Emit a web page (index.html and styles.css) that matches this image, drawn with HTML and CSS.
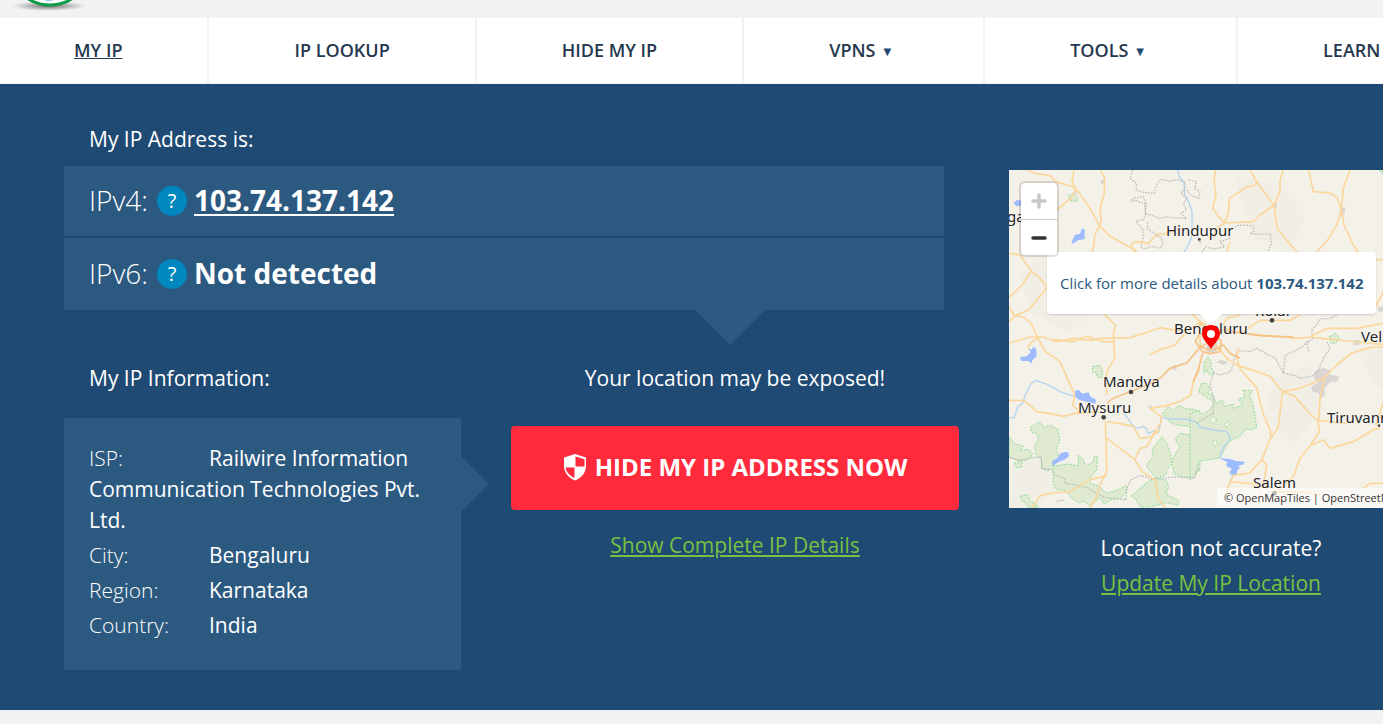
FILE: index.html
```html
<!DOCTYPE html>
<html lang="en">
<head>
<meta charset="utf-8">
<title>My IP Address</title>
<link rel="stylesheet" href="styles.css">
</head>
<body>
<header class="top">
  <svg class="logo" width="90" height="18" viewBox="0 0 90 18" aria-hidden="true">
    <defs>
      <radialGradient id="shade"><stop offset="0" stop-color="#555" stop-opacity=".9"/><stop offset=".5" stop-color="#777" stop-opacity=".5"/><stop offset="1" stop-color="#999" stop-opacity="0"/></radialGradient>
    </defs>
    <ellipse cx="49" cy="6" rx="38" ry="5" fill="url(#shade)"/>
    <circle cx="50" cy="-36" r="41" fill="#fff" stroke="#0a9a48" stroke-width="3"/>
    <ellipse cx="49" cy="-2" rx="7" ry="3" fill="#8cc4e8"/>
  </svg>
</header>
<nav class="nav">
  <a class="nav-item current" href="#">MY IP</a>
  <a class="nav-item" href="#">IP LOOKUP</a>
  <a class="nav-item" href="#">HIDE MY IP</a>
  <a class="nav-item" href="#">VPNS<span class="caret">▼</span></a>
  <a class="nav-item" href="#">TOOLS<span class="caret">▼</span></a>
  <a class="nav-item" href="#">LEARN</a>
</nav>
<main class="hero">
  <div class="hero-grid">
    <section>
      <h2 class="title">My IP Address is:</h2>
      <div class="addresses">
        <div class="address"><span class="kind">IPv4:</span><button class="help" type="button">?</button><a class="ip" href="#">103.74.137.142</a></div>
        <div class="address last"><span class="kind">IPv6:</span><button class="help" type="button">?</button><span class="ip">Not detected</span></div>
      </div>
      <div class="lower">
        <div>
          <h2 class="title info-title">My IP Information:</h2>
          <div class="info">
            <p><span class="label">ISP:</span>Railwire Information Communication Technologies Pvt. Ltd.</p>
            <p><span class="label">City:</span>Bengaluru</p>
            <p><span class="label">Region:</span>Karnataka</p>
            <p><span class="label">Country:</span>India</p>
          </div>
        </div>
        <div class="action">
          <h2 class="exposed">Your location may be exposed!</h2>
          <button class="hide-btn" type="button">
            <svg width="24" height="28" viewBox="0 0 24 28" aria-hidden="true">
              <path d="M12 1 23 4.500V13c0 7-5 12-11 14.500C6 25 1 20 1 13V4.500Z" fill="#fff"/>
              <path d="M12.500 3.500 21.500 6.300V13.500h-9Z" fill="#ff2a3b"/>
              <path d="M11.500 14.500V25C6.500 22.500 3.200 19 2.700 14.500Z" fill="#ff2a3b"/>
            </svg>
            HIDE MY IP ADDRESS NOW
          </button>
          <a class="link" href="#">Show Complete IP Details</a>
        </div>
      </div>
    </section>
    <aside class="side">
      <div class="map">
        <svg class="tiles" viewBox="27 15 1212 1014" preserveAspectRatio="xMidYMid slice" aria-hidden="true">
          <rect x="27" y="15" width="1212" height="1014" fill="#f4f1e9"/>
          <g class="relief">
            <path d="M60 330 150 250 260 300 330 420 200 500 90 440Z"/>
            <path d="M700 30 840 60 920 150 870 260 760 220Z"/>
            <path d="M820 640 930 600 970 720 880 850 800 760Z"/>
            <path d="M1080 560 1239 540V690L1120 660Z"/>
            <path d="M40 900 120 860 180 960 110 1029H27Z"/>
          </g>
          <g class="forest">
            <path d="M205 92 222 86 234 98 228 110 208 106Z"/>
            <g transform="translate(570 0)"><path d="M568 15 579 15 579 28ZM418 515 436 505 448 516 440 532 424 536Z"/></g>
            <g transform="translate(0 525)">
              <path d="M277 80 300 76 308 92 306 114 292 110 290 98 278 98Z"/>
              <path d="M90 262 120 246 132 262 152 256 174 268 180 300 168 330 178 352 158 378 146 392 125 386 124 360 108 345 104 318 115 300 112 280 96 278Z"/>
              <path d="M27 290 46 312 70 318 60 332 84 328 98 340 90 356 60 362 27 352ZM42 370 66 362 64 382 50 384Z"/>
              <path d="M160 378 205 372 236 378 234 345 250 358 256 378 280 366 282 350 292 350 290 390 272 410 270 430 300 440 318 460 352 450 380 436 382 450 362 476 330 480 312 492 300 472 280 490 270 500 255 484 235 488 212 472 196 450 170 450 160 430Z"/>
              <path d="M62 468 84 464 90 484 110 492 112 502 84 502 78 488 66 484Z"/>
              <path d="M486 220 506 200 520 212 536 196 556 206 580 208 600 214 600 270 578 266 560 258 536 256 510 248 500 236Z"/>
              <path d="M486 290 500 310 512 340 516 370 500 390 498 404 470 416 440 380 446 364 460 350 456 328 470 310Z"/>
              <path d="M600 275 570 285 540 280 526 300 540 320 524 345 516 370 522 400 540 410 570 412 600 390Z"/>
              <path d="M394 468 430 436 460 414 498 420 506 440 498 462 536 482 534 496 500 488 470 496 440 502 420 500 408 480Z"/>
            </g>
            <g transform="translate(570 525)">
              <path d="M42 68 54 50 64 68 62 80 74 98 58 104 50 90 42 100ZM26 155 34 130 50 130 60 145 52 160 70 165 78 190 96 180 104 200 130 192 130 206 158 194 146 178 164 170 160 150 188 152 178 168 188 190 196 230 200 262 186 270 168 266 148 290 124 300 108 320 90 354 26 364 20 396 0 420 0 222 20 212 40 222 60 210 74 186 50 174Z"/>
            </g>
          </g>
          <g class="hole"><circle cx="640" cy="765" r="9"/><circle cx="682" cy="778" r="7"/><circle cx="645" cy="835" r="8"/></g>
          <g class="town">
            <path d="M302 45 312 42 314 54 304 58ZM218 82 230 78 232 88Z"/>
            <path d="M1022 130 1036 126 1034 148 1020 156ZM818 118 830 114 830 128 818 128ZM590 225 606 222 602 238ZM1060 526 1080 524 1078 540 1060 540ZM1134 425 1150 425 1148 440 1134 440Z"/>
            <path d="M620 540 650 530 656 550 640 566 620 560ZM648 592 662 584 684 590 672 600ZM518 602 530 600 530 614 520 616ZM442 724 454 720 454 732Z"/>
            <path d="M944 620 968 608 992 616 990 630 1016 632 1014 648 990 652 974 668 974 692 960 702 956 684 938 680 934 664 954 654 942 640Z"/>
          </g>
          <g class="water">
            <path d="M40 114 50 106 64 106 64 122 50 124Z"/>
            <path d="M214 234 224 210 240 206 246 190 254 194 254 222 234 226 218 236Z"/>
            <path d="M60 576 80 574 92 562 84 550 96 554 98 546 108 550 110 574 98 584 94 596 86 588 64 588Z"/>
            <path d="M226 676 238 676 246 686 266 682 270 694 288 704 286 716 276 714 264 712 236 704 224 694Z"/>
            <path d="M156 888 172 880 182 864 202 860 208 872 194 884 174 892 158 904Z"/>
            <path d="M658 880 690 882 708 888 734 890 732 898 714 902 720 908 712 916 710 930 696 932 688 922 696 912 678 902 682 892Z"/>
          </g>
          <g class="river">
            <path d="M533 15 540 40 552 50 554 90 566 110 576 140 576 180 574 220 560 250 550 262"/>
            <path d="M27 758 42 758 54 724 68 715 76 690 90 660 106 646 130 654 150 662 180 680 210 690 226 694M368 740 384 760 400 784 414 790 430 784 440 792 444 806 460 798 476 802 480 782 484 758 510 762 560 762 590 772 600 786 640 795 680 800 692 818 668 850 658 880"/>
            <path d="M694 935 684 970 678 1029" opacity=".5"/>
          </g>
          <g class="border">
            <path d="M398 15 390 40 410 55 408 75 430 82 462 85 470 60 480 44 510 48 530 44 556 52 554 72 542 84 560 100 550 118 560 134 542 146 560 160 520 158 500 156 480 160 458 152 436 146 434 115 420 112 408 106 392 110 400 100 430 95 438 114 436 150 430 164 408 168 420 184 430 196 428 224 422 244 434 252 454 244 480 250 490 236 484 220 456 200 442 190 444 170"/>
            <path d="M566 45 590 50 584 70 600 80 596 100 570 90 560 72"/>
            <path d="M704 186 720 180 760 182 762 198 750 206 780 208 812 206 814 236 804 260M606 262 616 246 644 252 674 246 660 230 690 220"/>
            <path d="M1010 450 990 460 960 462 950 480 935 496 938 520 920 535 926 560"/>
            <path d="M27 876 50 884 76 886 90 878 124 876 126 910 156 914 162 930 194 940 196 956 230 960 262 968 290 986 320 998 350 1000 378 1004 380 970 392 946 406 938 420 932 440 936 456 944 480 940 520 936 560 938 584 940 590 918 600 914M170 1010 186 1004 194 1010"/>
            <path d="M590 775 610 762 640 745 640 700 630 660 640 625 662 630 690 620 700 600 702 580 714 556 750 560 770 550 810 572 826 580 850 624 856 570 880 560 906 546 926 525M850 624 886 632 900 640 940 632 956 615 970 580 990 550 980 530"/>
          </g>
          <g class="road">
            <path d="M80 15 110 26 150 32 168 50 220 66 234 78 270 130 300 184 326 210 372 238 404 254 420 272M222 15 216 50 228 72 214 98 172 134M302 15 314 40 312 90 300 130 304 170 298 184 284 210 282 240 270 280"/>
            <path d="M394 245 400 232 426 230 444 236 470 208 500 205 550 190M394 245 404 260"/>
            <path d="M27 265 60 270 74 290 94 318 120 340 144 370M140 370 86 434 46 452 27 470M94 318 70 356 50 376 27 396M27 425 42 450 74 458 94 476 112 516 136 560 180 590 224 688M27 534 50 528 90 516 130 516 170 530 220 520 270 526 300 520 390 518 440 502 480 488 530 496 570 494M314 450 330 464 346 480 340 510 344 580 320 620 320 690M112 520 90 536 84 550"/>
            <path d="M27 707 70 706 90 720 110 740 150 746 190 754 220 746 270 742M224 688 218 720 240 744 300 740M316 770 318 830 320 920 300 960 288 1000 270 1029M320 770 360 776 400 784 420 820 454 816 484 770 484 755 450 730 500 722 540 710 572 690 580 650 600 610M320 820 360 850 404 884 420 850 440 846 460 810 480 795M404 884 426 920 466 945 474 1000 496 1029M320 932 270 944 210 980 160 984 120 992 96 1029"/>
            <path d="M646 15 642 50 648 90 638 130 660 160 674 172 686 140 688 100 740 66 766 60 770 50 750 15M770 50 822 122 832 190 880 250 900 270M850 15 840 44 840 80 822 122 780 150 760 170 674 174 650 190 640 220M926 15 934 50 940 80 990 84 1012 98 1024 134 1010 180 980 230 950 260M1050 15 1030 70 1024 134 1032 180 1060 240 1080 270M1120 285 1150 284M690 230 680 260M1124 430 1150 380"/>
            <path d="M450 570 480 554 524 540 560 500 590 480 600 470 600 540M160 524 220 530 260 514 310 530 344 530"/>
            <path d="M570 440 600 470 640 495 720 504 800 512 900 520 930 516 980 490 1070 490 1150 474M690 500 670 480 680 460 720 450M720 505 780 466 870 466 900 450M930 516 1000 524 1040 528 1100 534 1150 538M640 530 680 580 714 602 760 616 810 634 848 680 900 670 930 658 970 640 1010 600 1056 564 1110 548 1239 540M714 550 710 580 720 612 770 668 782 720 794 758 812 800 812 816 786 884 770 900 750 924 700 932 686 960 680 1000M848 680 834 790 812 820M848 680 884 694 924 740 954 768 958 800 930 842 900 880 880 935 810 1000M974 638 960 700 956 766 1040 776M930 842 970 824 990 850 1060 830 1120 794 1140 790M786 884 800 900 792 950 780 980M690 950 800 960 830 980 920 982 960 990M1090 970 1110 955 1239 955M1128 780 1150 710"/>
          </g>
          <g class="highway">
            <path d="M320 715 340 700 390 680 440 660 480 640 510 610 560 594 594 554 620 535"/>
            <path d="M600 475 620 488 650 494 700 500 780 512 880 516M586 530 596 510 620 502 650 510 664 530 660 560 630 566 608 560ZM600 540 620 554 650 552 670 540 690 565 720 580M608 564 596 610 580 650"/>
          </g>
          <g class="spot"><circle cx="598" cy="223" r="4"/><circle cx="816" cy="466" r="7"/><circle cx="393" cy="681" r="7"/><circle cx="311" cy="757" r="7"/><circle cx="1137" cy="782" r="4"/><circle cx="823" cy="985" r="7"/></g>
        </svg>
        <span class="place ga">ga</span>
        <span class="place hindupur">Hindupur</span>
        <span class="place kolar">Kolar</span>
        <span class="place bengaluru">Bengaluru</span>
        <span class="place vellore">Vellore</span>
        <span class="place mandya">Mandya</span>
        <span class="place mysuru">Mysuru</span>
        <span class="place tiru">Tiruvann</span>
        <span class="place salem">Salem</span>
        <div class="popup">Click for more details about <b>103.74.137.142</b></div>
        <svg class="pin" width="20" height="24" viewBox="0 0 20 24" aria-hidden="true"><path d="M10 0C4.500 0 1 4 1 8.500 1 14 7 19 10 24c3-5 9-10 9-15.500C19 4 15.500 0 10 0Z" fill="#f00"/><circle cx="10" cy="9" r="4" fill="#fff"/></svg>
        <div class="zoom">
          <button type="button" aria-label="Zoom in" disabled><svg width="16" height="16" viewBox="0 0 16 16"><path d="M8 2v12M2 8h12" stroke="#c8c8c8" stroke-width="3.500" stroke-linecap="round"/></svg></button>
          <button type="button" aria-label="Zoom out"><svg width="16" height="16" viewBox="0 0 16 16"><path d="M2 8h12" stroke="#333" stroke-width="3.500" stroke-linecap="round"/></svg></button>
        </div>
        <div class="credit">© OpenMapTiles | OpenStreetMap</div>
      </div>
      <p class="accurate">Location not accurate?</p>
      <a class="link" href="#">Update My IP Location</a>
    </aside>
  </div>
</main>
</body>
</html>
```

FILE: styles.css
```css
* { box-sizing: border-box; }

body {
  margin: 0;
  overflow-x: hidden;
  background: #f1f2f4;
  color: #fff;
  font-family: "Open Sans", "Noto Sans", sans-serif;
  font-size: 21px;
  line-height: 30px;
}

h2, p { margin: 0; font-size: 21px; font-weight: 400; }
button { font-family: inherit; border: 0; padding: 0; cursor: pointer; }

.top { height: 18px; }
.logo { display: block; }

/* navigation */
.nav {
  display: flex;
  gap: 2px;
  margin-left: -11px;
  overflow: hidden;
  border-bottom: 1px solid #f4f5f6;
}
.nav-item {
  flex: none;
  padding: 0 85px;
  background: #fff;
  color: #26384e;
  font-size: 18px;
  font-weight: 600;
  line-height: 65px;
  text-decoration: none;
}
.nav-item:last-child { flex: 1 0 auto; padding-right: 0; }
.current { text-decoration: underline; }
.caret {
  margin: 0 7px 0 8px;
  color: #1f4a73;
  font-family: "DejaVu Sans", sans-serif;
  font-size: 10px;
  vertical-align: 2px;
  line-height: 10px;
}

/* hero */
.hero {
  padding: 40px 0 40px 64px;
  overflow: hidden;
  background: #1f4a73;
}
.hero-grid {
  display: grid;
  grid-template-columns: 1fr 404px;
  gap: 50px;
  margin-right: -30px;
}
.title { padding-left: 25px; }

.addresses {
  position: relative;
  display: grid;
  gap: 2px;
  margin: 12px 15px 53px 0;
}
.addresses::after {
  content: "";
  position: absolute;
  top: 100%;
  right: 179px;
  border: 35px solid transparent;
  border-top-color: #2c5980;
  border-bottom: 0;
}
.address {
  display: flex;
  align-items: center;
  height: 70px;
  padding-left: 25px;
  background: #2c5980;
  font-size: 28px;
}
.address.last { height: 72px; }
.kind { width: 68px; font-weight: 300; }
.help {
  width: 30px;
  height: 30px;
  margin-right: 7px;
  border-radius: 50%;
  background: #0087be;
  color: #fff;
  font-size: 20px;
  line-height: 30px;
}
.kind, .ip { padding-bottom: 2px; }
.ip {
  color: #fff;
  font-weight: 700;
  text-decoration-thickness: 2px;
  text-underline-offset: 3px;
}

.lower {
  display: grid;
  grid-template-columns: 397fr 448fr;
  gap: 50px;
}
.info {
  position: relative;
  display: grid;
  gap: 4px;
  margin-top: 25px;
  padding: 25px 25px 29px;
  background: #2c5980;
  line-height: 31px;
}
.info::after {
  content: "";
  position: absolute;
  left: 100%;
  top: 38px;
  border: 28px solid transparent;
  border-left-color: #2c5980;
  border-right: 0;
}
.label { display: inline-block; width: 120px; font-weight: 300; }

.action { text-align: center; }
.hide-btn {
  display: flex;
  align-items: center;
  justify-content: center;
  gap: 8px;
  width: 100%;
  height: 84px;
  margin: 33px 0 20px;
  padding-bottom: 3px;
  border-radius: 4px;
  background: #ff2a3b;
  color: #fff;
  font-size: 24px;
  font-weight: 700;
}
.link {
  color: #79c142;
  text-decoration-thickness: 2px;
  text-underline-offset: 2px;
}

/* map column */
.side { padding-top: 46px; text-align: center; }
.map {
  position: relative;
  height: 338px;
  margin-bottom: 25px;
  overflow: hidden;
}
.tiles { display: block; width: 100%; height: 100%; }
.tiles path { stroke-linejoin: round; }
.relief { fill: #f1eee6; }
.forest { fill: #dfead0; stroke: #8fdc98; stroke-width: 3; stroke-dasharray: 6 4; }
.hole { fill: #f4f1e9; stroke: #8fdc98; stroke-width: 3; stroke-dasharray: 6 4; }
.town { fill: #d9d6d4; }
.water { fill: #9dbcff; }
.river { fill: none; stroke: #b4d4ee; stroke-width: 4; }
.border { fill: none; stroke: #bdbdbd; stroke-width: 4; stroke-dasharray: 5 4; }
.road { fill: none; stroke: #fbd79b; stroke-width: 5; }
.highway { fill: none; stroke: #f6c184; stroke-width: 5; }
.spot { fill: #444; }

.place {
  position: absolute;
  color: #222;
  font-family: "Noto Sans", sans-serif;
  font-size: 15px;
  line-height: 20px;
  text-shadow: 0 0 2px #fff, 0 0 2px #fff;
}
.ga { left: -2px; top: 36px; }
.hindupur { left: 157px; top: 50px; }
.kolar { left: 246px; top: 130px; }
.bengaluru { left: 165px; top: 148px; }
.vellore { left: 352px; top: 156px; }
.mandya { left: 94px; top: 201px; }
.mysuru { left: 69px; top: 227px; }
.tiru { left: 318px; top: 237px; }
.salem { left: 244px; top: 302px; }

.popup {
  position: absolute;
  left: 38px;
  top: 82px;
  padding: 16px 12px 16px 13px;
  border-radius: 4px;
  background: #fff;
  box-shadow: 0 1px 2px rgba(0, 0, 0, .15);
  color: #2c5980;
  font-size: 15px;
  white-space: nowrap;
}
.popup::after {
  content: "";
  position: absolute;
  left: 50%;
  top: 100%;
  margin-left: -11px;
  border: 11px solid transparent;
  border-top-color: #fff;
  border-bottom: 0;
}
.pin { position: absolute; left: 192px; top: 155px; }

.zoom {
  position: absolute;
  left: 10px;
  top: 11px;
  display: grid;
  grid-template-rows: 37px 35px;
  width: 40px;
  border: 2px solid rgba(0, 0, 0, .13);
  border-radius: 6px;
  background: #fff;
  background-clip: padding-box;
}
.zoom button { display: grid; place-items: center; background: none; }
.zoom button:first-child { border-bottom: 1px solid #ccc; }

.credit {
  position: absolute;
  left: 208px;
  right: 0;
  bottom: 0;
  padding-left: 7px;
  background: rgba(255, 255, 255, .6);
  color: #333;
  font-size: 11px;
  line-height: 20px;
  text-align: left;
  white-space: nowrap;
}
.accurate { margin-bottom: 5px; }
```
